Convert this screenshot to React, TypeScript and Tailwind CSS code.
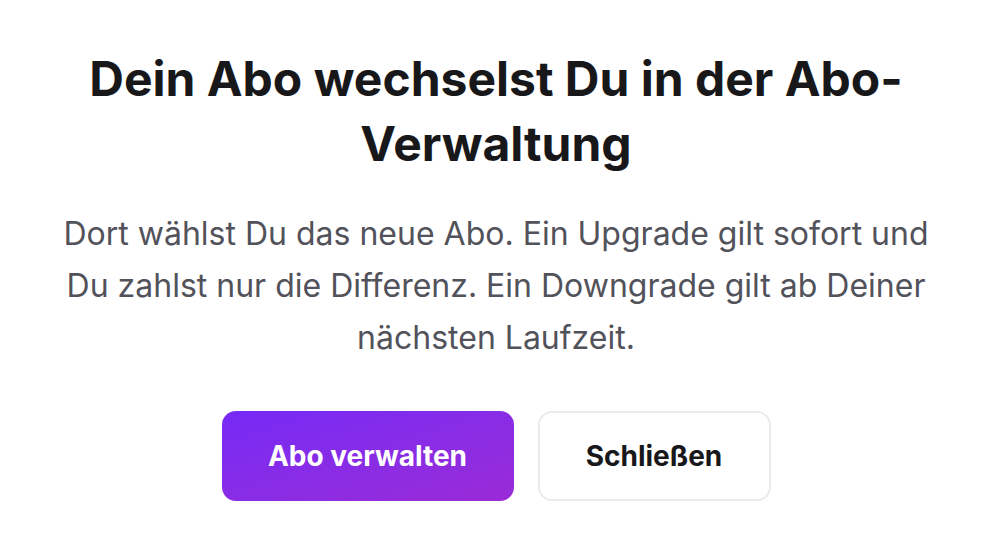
export default function App() {
  return (
    <div className="min-h-screen w-full bg-white flex justify-center font-['Inter',sans-serif]">
      <div className="w-[880px] pt-[46px] flex flex-col items-center text-center">
        <h2 className="text-[48px] leading-[65px] font-bold text-[#18181b]">
          Dein Abo wechselst Du in der Abo-Verwaltung
        </h2>
        <p className="mt-[32px] text-[32px] leading-[52px] text-[#52525b]">
          Dort wählst Du das neue Abo. Ein Upgrade gilt sofort und Du zahlst nur die Differenz. Ein Downgrade gilt ab
          Deiner nächsten Laufzeit.
        </p>
        <div className="mt-[47px] flex gap-[24px]">
          <button className="w-[292px] h-[90px] rounded-[14px] bg-gradient-to-br from-[#7629f6] to-[#9a2ad6] text-white text-[28px] font-bold">
            Abo verwalten
          </button>
          <button className="w-[233px] h-[90px] rounded-[14px] border-2 border-[#ebebed] bg-white text-[#18181b] text-[28px] font-bold">
            Schließen
          </button>
        </div>
      </div>
    </div>
  );
}
